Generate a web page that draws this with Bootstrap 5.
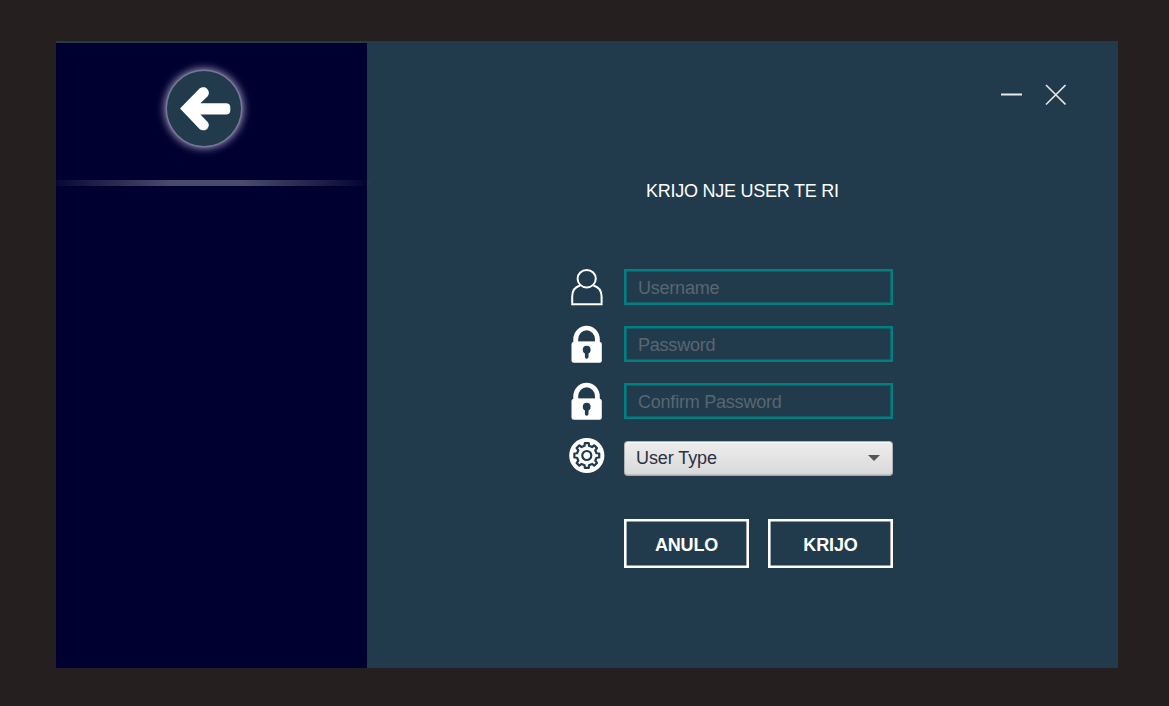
<!DOCTYPE html>
<html lang="sq">
<head>
<meta charset="utf-8">
<meta name="viewport" content="width=device-width, initial-scale=1">
<title>Krijo nje user te ri</title>
<link href="https://cdn.jsdelivr.net/npm/bootstrap@5.3.0/dist/css/bootstrap.min.css" rel="stylesheet">
<style>
  body { background: #261f1f; font-family: "Liberation Sans", Arial, sans-serif; height: 706px; overflow: hidden; padding: 41px 0 0 56px; }
  .app-window { width: 1062px; height: 627px; background: #213b4d; }
  .side-panel { width: 311px; margin-top: 2px; background: #000030; }
  .back-btn { width: 74px; height: 75px; margin: 27.5px 0 0 111px; background: #213b4d; border: 0; border-radius: 50%; box-shadow: 0 0 0 1.5px #77769a, 0 0 8px 2px #aaa6c4; }
  .back-btn svg { display: block; }
  .side-rule { width: 318px; height: 6px; margin-top: 34px; background: linear-gradient(90deg, rgba(255,255,255,.03), rgba(255,255,255,.29) 36%, rgba(255,255,255,.29) 59%, rgba(255,255,255,0)); filter: blur(.6px); }
  .win-controls { padding: 43px 52px 0 0; gap: 23px; height: 66px; }
  .win-controls button, .form-icon { line-height: 0; }
  .page-title { font-size: 18px; line-height: 24px; letter-spacing: -.25px; margin: 72px 0 0 279px; color: #fff; }
  .user-form { width: 324px; margin: 66.4px 0 0 202px; }
  .field-row { height: 36px; margin-bottom: 21px; }
  .form-icon { width: 36px; flex: none; }
  .form-icon svg { overflow: visible; }
  .field-row .form-control { width: 269px; height: 36px; background: transparent; border: 2px solid #008080; box-shadow: inset 0 0 0 .6px #008080; border-radius: 0; color: #fff; font-size: 18px; line-height: 24px; letter-spacing: -.22px; padding: 5px 12px 3px; }
  .field-row .form-control::placeholder { color: #5a666f; opacity: 1; }
  .type-select { width: 269px; height: 35px; margin-top: 1px; padding: 0 12px 1px 11px; border: 1px solid #aeb3b6; border-bottom-color: #a5a9ac; border-radius: 4px; background: linear-gradient(#ededed, #d9d9d9); box-shadow: inset 0 1px #fafafa, inset 0 -1px #c2c2c2; color: #2a3144; font-size: 18px; letter-spacing: -.08px; }
  .type-select span { padding-top: 1px; }
  .form-actions { padding: 22px 0 0 55px; gap: 19px; }
  .form-actions .btn { width: 125px; height: 49px; border: 2px solid #fff; box-shadow: inset 0 0 0 .6px #fff; border-radius: 0; color: #fff; font-size: 18px; font-weight: 700; letter-spacing: -.15px; padding: 3px 0 0; }
</style>
</head>
<body>
<main class="app-window d-flex">
  <aside class="side-panel flex-shrink-0">
    <button class="back-btn d-block p-0" aria-label="Back">
      <svg width="74" height="75" viewBox="0 0 74 75"><path d="M13 37.600 32.300 17.800C34.200 16 38 15.700 40.200 17.900c2.400 2.400 2.100 5.800 0 7.900L33.400 32.200H59q4.300 0 4.300 4v3.200q0 4-4.300 4H33.400l6.800 7.200c2.100 2.100 2.300 4.900.1 7.100-2.100 2.100-6 2.100-8 .1Z" fill="#fff"/></svg>
    </button>
    <div class="side-rule"></div>
  </aside>
  <section class="flex-grow-1">
    <div class="win-controls d-flex justify-content-end">
      <button class="btn border-0 p-0 align-self-start" aria-label="Minimize"><svg width="22" height="22"><path d="M1 10.500H22" stroke="#ece9e9" stroke-width="2"/></svg></button>
      <button class="btn border-0 p-0 align-self-start" aria-label="Close"><svg width="21" height="22"><path d="M1 1 20.500 20.500M20.500 1 1 20.500" stroke="#e8e5e5" stroke-width="1.600"/></svg></button>
    </div>
    <h1 class="page-title fw-normal">KRIJO NJE USER TE RI</h1>
    <form class="user-form">
      <div class="field-row d-flex justify-content-between">
        <span class="form-icon"><svg width="36" height="38" viewBox="0 0 36 38" fill="none" stroke="#fff" stroke-width="2"><ellipse cx="17.700" cy="9.700" rx="9.100" ry="8.700"/><path d="M11 16.500C5.800 18 3.200 22 3.200 27.500V35.200H32.600V27.500C32.600 22 29.800 18 24.400 16.500"/></svg></span>
        <input class="form-control" type="text" placeholder="Username">
      </div>
      <div class="field-row d-flex justify-content-between">
        <span class="form-icon"><svg width="36" height="38" viewBox="0 0 36 38"><path d="M4.300 17.500V13.600a13.250 13.800 0 0 1 26.500 0V17.500Z" fill="#fff"/><path d="M9.200 15.500V13.300a8.400 9 0 0 1 16.800 0V15.500Z" fill="#213b4d"/><rect x="2.500" y="15.800" width="30.300" height="21" rx="2.500" fill="#fff"/><circle cx="17.700" cy="23.700" r="3.900" fill="#213b4d"/><path d="M17.700 25V31" stroke="#213b4d" stroke-width="3.600" stroke-linecap="round"/></svg></span>
        <input class="form-control" type="password" placeholder="Password">
      </div>
      <div class="field-row d-flex justify-content-between">
        <span class="form-icon"><svg width="36" height="38" viewBox="0 0 36 38"><path d="M4.300 17.500V13.600a13.250 13.800 0 0 1 26.500 0V17.500Z" fill="#fff"/><path d="M9.200 15.500V13.300a8.400 9 0 0 1 16.800 0V15.500Z" fill="#213b4d"/><rect x="2.500" y="15.800" width="30.300" height="21" rx="2.500" fill="#fff"/><circle cx="17.700" cy="23.700" r="3.900" fill="#213b4d"/><path d="M17.700 25V31" stroke="#213b4d" stroke-width="3.600" stroke-linecap="round"/></svg></span>
        <input class="form-control" type="password" placeholder="Confirm Password">
      </div>
      <div class="field-row d-flex justify-content-between">
        <span class="form-icon"><svg width="36" height="36" viewBox="-18 -15.500 36 36"><circle cx="-.2" cy="0" r="17.600" fill="#fff"/><g transform="translate(-.2 0) scale(1.050)" fill="none" stroke="#213b4d" stroke-width="2.100" stroke-linejoin="round"><path d="M-2.140-9.260-1.880-11.850H1.880L2.140-9.260 5.030-8.060 7.050-9.710 9.710-7.050 8.060-5.030 9.260-2.140 11.850-1.880V1.880L9.260 2.140 8.060 5.030 9.710 7.050 7.050 9.710 5.030 8.060 2.140 9.260 1.880 11.850H-1.880L-2.140 9.260-5.030 8.060-7.050 9.710-9.710 7.050-8.060 5.030-9.260 2.140-11.850 1.880V-1.880L-9.260-2.140-8.060-5.030-9.710-7.050-7.050-9.710-5.030-8.060Z"/><circle r="4.300"/></g></svg></span>
        <button class="type-select d-flex align-items-center justify-content-between" type="button"><span>User Type</span><svg width="12" height="6"><path d="M0 0H12L6 6Z" fill="#555"/></svg></button>
      </div>
      <div class="form-actions d-flex">
        <button class="btn" type="button">ANULO</button>
        <button class="btn" type="button">KRIJO</button>
      </div>
    </form>
  </section>
</main>
<script src="https://cdn.jsdelivr.net/npm/bootstrap@5.3.0/dist/js/bootstrap.bundle.min.js"></script>
</body>
</html>
